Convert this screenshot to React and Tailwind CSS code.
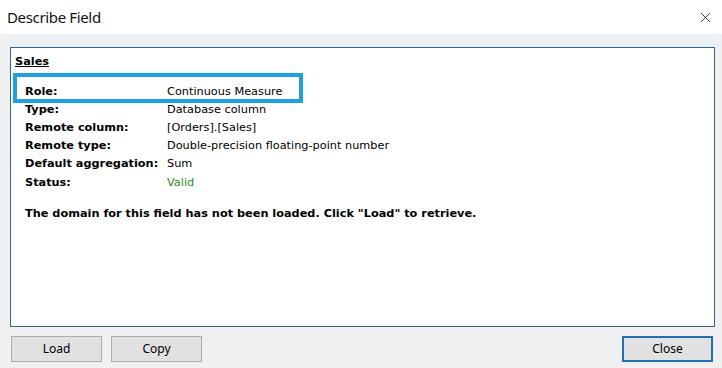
import { X } from 'lucide-react';

const rows = [
  ['Role:', 'Continuous Measure'],
  ['Type:', 'Database column'],
  ['Remote column:', '[Orders].[Sales]'],
  ['Remote type:', 'Double-precision floating-point number'],
  ['Default aggregation:', 'Sum'],
  ['Status:', 'Valid'],
];

const dlgFont = { fontFamily: '"DejaVu Sans", Verdana, sans-serif' };

function DlgButton({ children, focused }) {
  return (
    <button
      type="button"
      className={
        focused
          ? 'h-[26px] w-[91px] border-2 border-[#1f6fb5] bg-[#e1e1e1] text-[12px] text-black'
          : 'h-[26px] w-[91px] border border-[#adadad] bg-[#e1e1e1] text-[12px] text-black'
      }
      style={{ fontFamily: '"Noto Sans", "Open Sans", sans-serif' }}
    >
      {children}
    </button>
  );
}

export default function App() {
  return (
    <div className="w-[722px] h-[368px] flex flex-col bg-[#f0f0f0] overflow-hidden">
      {/* title bar */}
      <div className="h-[34px] bg-white flex items-center justify-between pl-[7px] pr-[8px]">
        <span
          className="text-[15px] tracking-[-0.35px] text-[#111]"
          style={{ fontFamily: '"Noto Sans", "Open Sans", sans-serif' }}
        >
          Describe Field
        </span>
        <X size={17} strokeWidth={1.1} className="text-black" />
      </div>

      <div className="h-[13px] bg-[#eef1f4]" />

      {/* details panel */}
      <div
        className="relative ml-[10px] w-[705px] h-[280px] border border-[#2d6a89] bg-white pt-[7px] pl-[4px] text-[11.3px] text-black"
        style={dlgFont}
      >
        <div className="font-bold underline leading-[14px]">Sales</div>

        <div className="mt-[14px] flex flex-col pl-[10px]">
          {rows.map(([label, value]) => (
            <div key={label} className="flex h-[18.2px] items-center">
              <span className="w-[142px] font-bold">{label}</span>
              <span className={label === 'Status:' ? 'text-[#2a8a2a]' : ''}>{value}</span>
            </div>
          ))}
        </div>

        <p className="mt-[15px] pl-[10px] font-bold leading-[14px]">
          The domain for this field has not been loaded. Click "Load" to retrieve.
        </p>

        {/* highlight around the role row */}
        <div className="absolute left-[2px] top-[25px] w-[290px] h-[30px] border-4 border-[#1ba1e2]" />
      </div>

      {/* buttons */}
      <div className="mt-[8px] flex items-center pl-[11px] pr-[9px]">
        <div className="flex gap-[9px]">
          <DlgButton>Load</DlgButton>
          <DlgButton>Copy</DlgButton>
        </div>
        <div className="ml-auto">
          <DlgButton focused>Close</DlgButton>
        </div>
      </div>
    </div>
  );
}
